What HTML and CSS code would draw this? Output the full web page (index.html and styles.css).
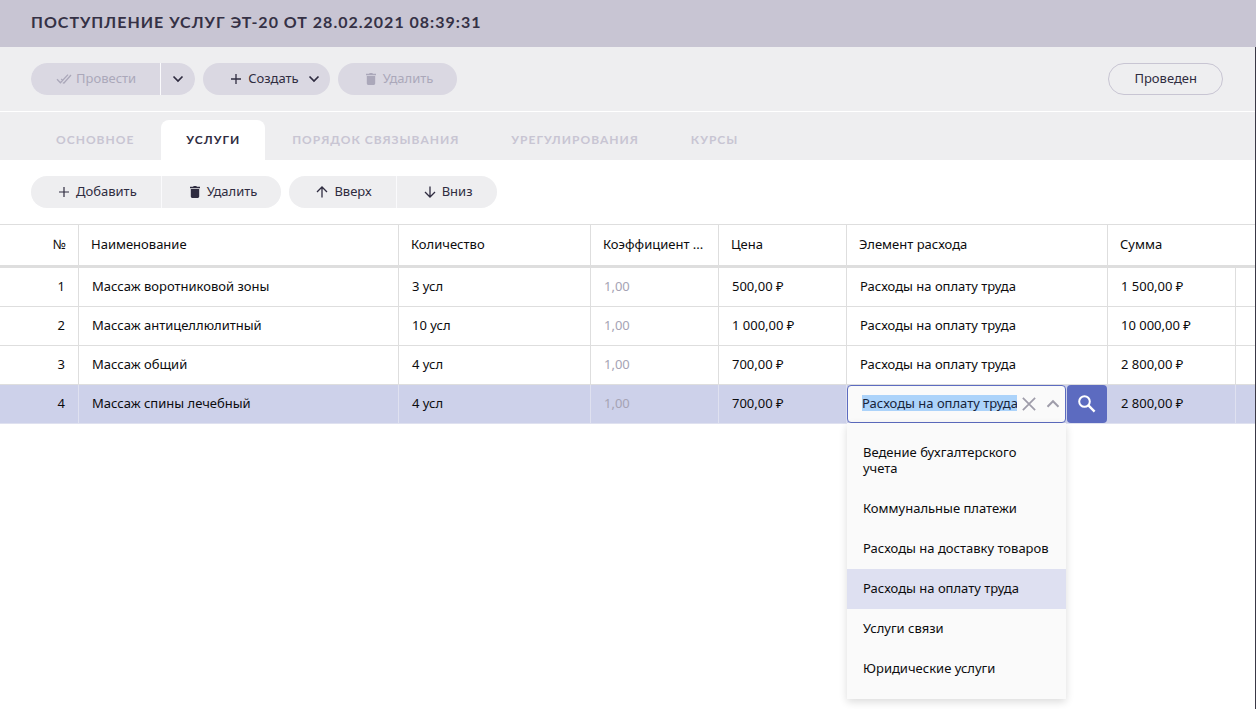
FILE: index.html
```html
<!DOCTYPE html>
<html lang="ru">
<head>
<meta charset="utf-8">
<meta name="viewport" content="width=device-width, initial-scale=1">
<title>Поступление услуг ЭТ-20</title>
<link rel="stylesheet" href="styles.css">
</head>
<body>
<header class="titlebar">
  <h1 class="title">Поступление услуг ЭТ-20 от 28.02.2021 08:39:31</h1>
</header>
<main class="document">
  <div class="commands">
    <div class="group">
      <button class="btn btn-dim" type="button" disabled>
        <svg class="icon" viewBox="0 0 16 16" fill="none" stroke="currentColor" stroke-width="1.3"><path d="M1 8.2l3.4 3.6L12 3.6M5.2 8l1.4 1.4M6.8 11.8L8 12l7-8"/></svg>
        <span class="label">Провести</span>
      </button>
      <button class="btn btn-arrow" type="button" aria-label="Другие действия">
        <svg class="chevron" viewBox="0 0 12 12" fill="none" stroke="currentColor" stroke-width="1.7"><path d="M1.5 3.5L6 8l4.5-4.5"/></svg>
      </button>
    </div>
    <div class="group">
      <button class="btn btn-menu" type="button">
        <svg class="icon" viewBox="0 0 16 16" fill="none" stroke="currentColor" stroke-width="1.3"><path d="M8 3v10M3 8h10"/></svg>
        <span class="label">Создать</span>
        <svg class="chevron" viewBox="0 0 12 12" fill="none" stroke="currentColor" stroke-width="1.7"><path d="M1.5 3.5L6 8l4.5-4.5"/></svg>
      </button>
    </div>
    <div class="group">
      <button class="btn btn-dim" type="button" disabled>
        <svg class="icon" viewBox="0 0 16 16" fill="currentColor"><path d="M3 2.8h3L6.8 2h2.4l.8.8h3v1.4H3zM3.8 5h8.4v7.6a1.4 1.4 0 0 1-1.4 1.4H5.2a1.4 1.4 0 0 1-1.4-1.4z"/></svg>
        <span class="label">Удалить</span>
      </button>
    </div>
    <span class="status">Проведен</span>
  </div>

  <nav class="tabs" role="tablist">
    <button class="tab" type="button" role="tab">Основное</button>
    <button class="tab tab-active" type="button" role="tab" aria-selected="true">Услуги</button>
    <button class="tab" type="button" role="tab">Порядок связывания</button>
    <button class="tab" type="button" role="tab">Урегулирования</button>
    <button class="tab" type="button" role="tab">Курсы</button>
  </nav>

  <div class="commands commands-light">
    <div class="group">
      <button class="btn" type="button">
        <svg class="icon" viewBox="0 0 16 16" fill="none" stroke="currentColor" stroke-width="1.2"><path d="M8 3v10M3 8h10"/></svg>
        <span class="label">Добавить</span>
      </button>
      <button class="btn" type="button">
        <svg class="icon" viewBox="0 0 16 16" fill="currentColor"><path d="M3 2.8h3L6.8 2h2.4l.8.8h3v1.4H3zM3.8 5h8.4v7.6a1.4 1.4 0 0 1-1.4 1.4H5.2a1.4 1.4 0 0 1-1.4-1.4z"/></svg>
        <span class="label">Удалить</span>
      </button>
    </div>
    <div class="group">
      <button class="btn" type="button">
        <svg class="icon" viewBox="0 0 16 16" fill="none" stroke="currentColor" stroke-width="1.3"><path d="M8 13.5V3M3 8l5-5 5 5"/></svg>
        <span class="label">Вверх</span>
      </button>
      <button class="btn" type="button">
        <svg class="icon" viewBox="0 0 16 16" fill="none" stroke="currentColor" stroke-width="1.3"><path d="M8 2.5V13M3 8l5 5 5-5"/></svg>
        <span class="label">Вниз</span>
      </button>
    </div>
  </div>

  <table class="grid">
    <colgroup>
      <col class="c-num"><col class="c-name"><col class="c-qty"><col class="c-std"><col class="c-std"><col class="c-item"><col class="c-std"><col>
    </colgroup>
    <thead>
      <tr>
        <th class="num">№</th><th>Наименование</th><th>Количество</th><th>Коэффициент ...</th><th>Цена</th><th>Элемент расхода</th><th class="open" colspan="2">Сумма</th>
      </tr>
    </thead>
    <tbody>
      <tr><td class="num">1</td><td>Массаж воротниковой зоны</td><td>3 усл</td><td class="muted">1,00</td><td>500,00 ₽</td><td>Расходы на оплату труда</td><td>1 500,00 ₽</td><td class="open"></td></tr>
      <tr><td class="num">2</td><td>Массаж антицеллюлитный</td><td>10 усл</td><td class="muted">1,00</td><td>1 000,00 ₽</td><td>Расходы на оплату труда</td><td>10 000,00 ₽</td><td class="open"></td></tr>
      <tr><td class="num">3</td><td>Массаж общий</td><td>4 усл</td><td class="muted">1,00</td><td>700,00 ₽</td><td>Расходы на оплату труда</td><td>2 800,00 ₽</td><td class="open"></td></tr>
      <tr class="selected"><td class="num">4</td><td>Массаж спины лечебный</td><td>4 усл</td><td class="muted">1,00</td><td>700,00 ₽</td>
        <td class="editing">
          <div class="editor">
            <div class="combo">
              <input class="combo-input" id="item" type="text" value="Расходы на оплату труда" role="combobox" aria-label="Элемент расхода" aria-expanded="true" aria-controls="items" autocomplete="off" autofocus>
              <button class="combo-btn" type="button" aria-label="Очистить">
                <svg class="clear" viewBox="0 0 16 16" fill="none" stroke="currentColor" stroke-width="2"><path d="M1 1l14 14M15 1L1 15"/></svg>
              </button>
              <button class="combo-btn" type="button" aria-label="Свернуть список">
                <svg class="collapse" viewBox="0 0 14 14" fill="none" stroke="currentColor" stroke-width="2"><path d="M1.5 9.8L7 4.2l5.5 5.6"/></svg>
              </button>
            </div>
            <button class="search" type="button" aria-label="Найти">
              <svg class="glass" viewBox="0 0 20 20" fill="none" stroke="currentColor" stroke-width="2"><circle cx="7.5" cy="7.5" r="5.3"/><path d="M11.4 11.4l6.2 6.2" stroke-width="2.4"/></svg>
            </button>
            <ul class="options" id="items" role="listbox">
              <li class="option" role="option">Ведение бухгалтерского учета</li>
              <li class="option" role="option">Коммунальные платежи</li>
              <li class="option" role="option">Расходы на доставку товаров</li>
              <li class="option option-current" role="option" aria-selected="true">Расходы на оплату труда</li>
              <li class="option" role="option">Услуги связи</li>
              <li class="option" role="option">Юридические услуги</li>
            </ul>
          </div>
        </td>
        <td>2 800,00 ₽</td><td class="open"></td></tr>
    </tbody>
  </table>
</main>
<script src="app.js"></script>
</body>
</html>
```
FILE: app.js
```js
const item = document.getElementById('item');
item.focus();
item.select();
```
FILE: styles.css
```css
* { box-sizing: border-box; }

body {
  margin: 0;
  min-height: 100vh;
  display: flex;
  flex-direction: column;
  background: #fff;
  color: #0c0c0e;
  font: 13px/16px "Noto Sans", "Open Sans", sans-serif;
}

button, input { font: inherit; color: inherit; }
button { border: 0; background: none; padding: 0; }

.titlebar {
  background: #c8c5d3;
  padding: 12px 31px 15px;
}
.title {
  margin: 0;
  color: #353145;
  font: 700 16px/20px "Lato", "Noto Sans", sans-serif;
  letter-spacing: 1px;
  text-transform: uppercase;
}

.document {
  flex: 1;
  border-right: 1px solid #3a3846;
}

.commands {
  display: flex;
  gap: 8px;
  padding: 16px 32px 16px 31px;
  background: #eeeef0;
  color: #2f2c40;
}
.commands-light { background: #fff; }
.group {
  display: flex;
  gap: 1px;
  border-radius: 16px;
  overflow: hidden;
}
.commands .group { background: #fafafc; }
.btn {
  display: flex;
  align-items: center;
  gap: 4px;
  height: 32px;
  padding: 0 24px 0 25px;
  background: #dad8e2;
}
.commands-light .btn { background: #eeeef0; }
.btn-dim { color: #aba8ba; }
.btn-arrow { padding: 0 11px; }
.btn-menu { padding-right: 10px; }
.btn-menu .chevron { margin-left: 5px; }
.label { padding-bottom: 2px; }
.icon { width: 16px; height: 16px; }
.chevron { width: 12px; height: 12px; }
.status {
  margin-left: auto;
  padding: 6px 25px 8px;
  border: 1px solid #c8c5d3;
  border-radius: 16px;
}

.tabs {
  display: flex;
  gap: 2px;
  padding: 8px 31px 0;
  background: #eeeef0;
  border-top: 1px solid #fff;
}
.tab {
  height: 40px;
  padding: 0 25px;
  border-radius: 8px 8px 0 0;
  color: #c8c5d3;
  font: 700 12px/16px "Lato", "Noto Sans", sans-serif;
  letter-spacing: 1px;
  text-transform: uppercase;
}
.tab-active { background: #fff; color: #2f2c40; }

.grid {
  width: 100%;
  table-layout: fixed;
  border-collapse: separate;
  border-spacing: 0;
  border-top: 1px solid #dedede;
}
.c-num { width: 79px; }
.c-name { width: 320px; }
.c-qty { width: 192px; }
.c-std { width: 128px; }
.c-item { width: 261px; }
.grid th, .grid td {
  padding: 0 12px 2px;
  border-right: 1px solid #dedede;
  border-bottom: 1px solid #dedede;
  text-align: left;
  white-space: nowrap;
}
.grid th {
  height: 43px;
  border-bottom-width: 3px;
  font-weight: 400;
}
.grid td { height: 39px; padding-left: 13px; }
.grid .num { text-align: right; }
.grid td.num { padding-right: 13px; }
.grid .open { border-right: 0; }
.grid .muted { color: #a5a3b4; }
.selected td {
  background: #cdd1ea;
  border-color: #dfe1f0;
}
.grid .editing { padding: 0 1px 0 0; border-right: 0; }

.editor {
  position: relative;
  display: flex;
  gap: 1px;
  height: 38px;
}
.combo {
  flex: 1;
  min-width: 0;
  display: flex;
  align-items: center;
  padding: 0 0 0 14px;
  border: 1px solid #5c6bc0;
  border-radius: 4px;
  background: #fafafa;
}
.combo-input {
  flex: 1;
  min-width: 0;
  padding: 0 0 2px;
  border: 0;
  outline: 0;
  background: none;
}
.combo-input::selection { background: #acd3fa; color: #17243a; }
.combo-btn {
  display: flex;
  justify-content: center;
  width: 24px;
  color: #9f9daa;
}
.clear, .collapse { width: 14px; height: 14px; }
.search {
  display: flex;
  align-items: center;
  justify-content: center;
  width: 40px;
  border-radius: 4px;
  background: #5c6bc0;
  color: #fff;
}
.glass { width: 20px; height: 20px; }
.options {
  position: absolute;
  top: 100%;
  left: 0;
  right: 41px;
  margin: 0;
  padding: 10px 0;
  list-style: none;
  background: #fafafa;
  box-shadow: 0 3px 8px rgba(0, 0, 0, 0.14);
  white-space: normal;
}
.option { padding: 11px 16px 13px; }
.option-current { background: #dee0f1; }
```
